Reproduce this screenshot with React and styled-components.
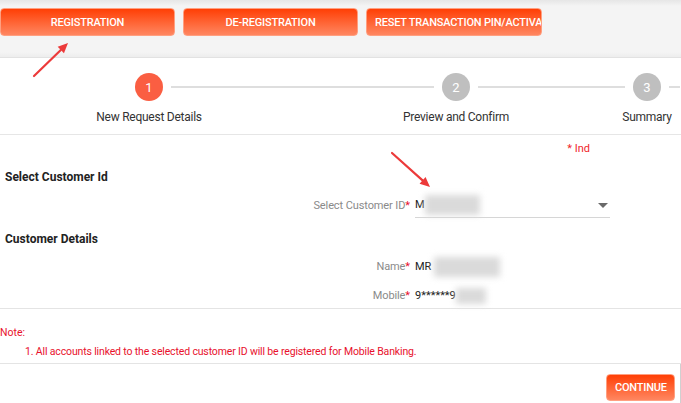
import React from 'react';
import styled, { createGlobalStyle } from 'styled-components';

const GlobalStyle = createGlobalStyle`
    html, body {
        margin: 0;
        padding: 0;
        background: #ffffff;
        font-family: Roboto, "Liberation Sans", Arial, sans-serif;
    }
`;

const Page = styled.div`
    position: relative;
    width: 681px;
    height: 403px;
    overflow: hidden;
    background: #fff;
`;

// แถบปุ่มเมนูด้านบน
const TabBar = styled.div`
    height: 58px;
    box-sizing: border-box;
    padding-top: 8px;
    display: flex;
    gap: 8px;
    background: linear-gradient(#e6e6e6 0px, #f4f4f4 6px, #f4f4f4 52px, #ececec 58px);
    border-bottom: 1px solid #e2e2e2;
`;

const OrangeButton = styled.button`
    flex: none;
    width: ${p => p.$w || 175}px;
    height: ${p => p.$h || 28}px;
    padding: 0 8px;
    border: 1px solid #ff9f80;
    border-radius: 4px;
    background: linear-gradient(#ff3f05, #ff6a3c 60%, #ff8660);
    color: #fff;
    font-family: Roboto, "Liberation Sans", Arial, sans-serif;
    font-size: 11px;
    font-weight: 500;
    letter-spacing: -0.2px;
    text-align: center;
    white-space: nowrap;
    overflow: hidden;
    cursor: pointer;
`;

const Stepper = styled.div`
    display: flex;
    height: 77px;
    box-sizing: border-box;
    padding-top: 15px;
    border-bottom: 1px solid #e6e6e6;
    overflow: hidden;
`;

const Step = styled.div`
    flex: none;
    width: ${p => p.$w}px;
    display: flex;
    flex-direction: column;
    align-items: center;
`;

const StepHead = styled.div`
    align-self: stretch;
    display: flex;
    align-items: center;
    height: 28px;
`;

const StepLine = styled.div`
    flex: 1;
    height: 2px;
    background: ${p => (p.$hidden ? 'transparent' : '#dedede')};
    margin: ${p => (p.$side === 'left' ? '0 8px 0 0' : '0 0 0 8px')};
`;

const Circle = styled.div`
    flex: none;
    width: 28px;
    height: 28px;
    border-radius: 50%;
    background: ${p => (p.$active ? '#fa5e42' : '#bfbfbf')};
    color: #fff;
    font-size: 13px;
    display: flex;
    align-items: center;
    justify-content: center;
`;

const StepLabel = styled.div`
    margin-top: 9px;
    font-size: 12px;
    line-height: 14px;
    color: #333;
    letter-spacing: -0.25px;
    white-space: nowrap;
`;

const Form = styled.div`
    padding-top: 8px;
`;

const MandatoryHint = styled.div`
    font-size: 11px;
    line-height: 12px;
    color: #f0262a;
    text-align: right;
    padding-right: 91px;
`;

const SectionTitle = styled.div`
    margin-top: ${p => p.$mt}px;
    padding-left: 5px;
    font-size: 12px;
    line-height: 16px;
    font-weight: 700;
    color: #222;
`;

const FieldRow = styled.div`
    margin-top: ${p => p.$mt}px;
    display: grid;
    grid-template-columns: 410px 195px;
    column-gap: 5px;
    align-items: center;
    font-size: 11px;
    line-height: ${p => p.$lh}px;
`;

const FieldLabel = styled.div`
    text-align: right;
    color: #8a8a8a;
    letter-spacing: -0.1px;

    & span {
        color: #e8112d;
    }
`;

const FieldValue = styled.div`
    display: flex;
    align-items: center;
    color: #222;
    height: ${p => p.$h || 20}px;
    border-bottom: ${p => (p.$select ? '1px solid #d6d6d6' : 'none')};
`;

const Masked = styled.span`
    display: inline-block;
    width: ${p => p.$w}px;
    height: ${p => p.$h}px;
    margin-left: ${p => p.$ml || 0}px;
    background: #dadada;
    filter: blur(3px);
`;

const Caret = styled.span`
    margin-left: auto;
    margin-right: 2px;
    width: 0;
    height: 0;
    border-left: 5px solid transparent;
    border-right: 5px solid transparent;
    border-top: 5px solid #6a6a6a;
`;

const Divider = styled.div`
    margin-top: ${p => p.$mt}px;
    height: 1px;
    background: #e4e4e4;
`;

const NoteBlock = styled.div`
    padding-top: 17px;
    padding-bottom: 4px;
    color: #e8112d;
    font-size: 10.5px;
    line-height: 14px;
    border-bottom: 1px solid #e4e4e4;
`;

const NoteItem = styled.div`
    margin-top: 5px;
    padding-left: 25px;
    letter-spacing: -0.15px;
`;

const Footer = styled.div`
    display: flex;
    justify-content: flex-end;
    padding: 10px 5px 0 0;
    border-right: 1px solid #d0d0d0;
    height: 40px;
`;

// ลูกศรสีแดงที่วางทับหน้าจอ
const Annotations = styled.svg`
    position: absolute;
    left: 0;
    top: 0;
    pointer-events: none;
`;

const Arrow = ({ x1, y1, x2, y2 }) => {
    const a = Math.atan2(y2 - y1, x2 - x1);
    const len = 10;
    const w = 4.5;
    const bx = x2 - len * Math.cos(a);
    const by = y2 - len * Math.sin(a);
    const px = -Math.sin(a) * w;
    const py = Math.cos(a) * w;
    return (
        <g>
            <line x1={x1} y1={y1} x2={bx} y2={by} stroke="#ec3a3a" strokeWidth="2.2" strokeLinecap="round" />
            <polygon points={`${x2},${y2} ${bx + px},${by + py} ${bx - px},${by - py}`} fill="#ec3a3a" />
        </g>
    );
};

const steps = [
    { n: 1, label: 'New Request Details', w: 298, active: true },
    { n: 2, label: 'Preview and Confirm', w: 316 },
    { n: 3, label: 'Summary', w: 66 },
];

const App = () => {
    return (
        <Page>
            <GlobalStyle />
            <TabBar>
                <OrangeButton>REGISTRATION</OrangeButton>
                <OrangeButton>DE-REGISTRATION</OrangeButton>
                <OrangeButton $w={176}>RESET TRANSACTION PIN/ACTIVATION</OrangeButton>
            </TabBar>

            <Stepper>
                {steps.map((s, i) => (
                    <Step key={s.n} $w={s.w}>
                        <StepHead>
                            <StepLine $side="left" $hidden={i === 0} />
                            <Circle $active={s.active}>{s.n}</Circle>
                            <StepLine $side="right" />
                        </StepHead>
                        <StepLabel>{s.label}</StepLabel>
                    </Step>
                ))}
            </Stepper>

            <Form>
                <MandatoryHint>* Ind</MandatoryHint>
                <SectionTitle $mt={14}>Select Customer Id</SectionTitle>
                <FieldRow $mt={8} $lh={24}>
                    <FieldLabel>Select Customer ID<span>*</span></FieldLabel>
                    <FieldValue $select $h={24}>
                        M<Masked $w={55} $h={20} />
                        <Caret />
                    </FieldValue>
                </FieldRow>

                <SectionTitle $mt={13}>Customer Details</SectionTitle>
                <FieldRow $mt={10} $lh={20}>
                    <FieldLabel>Name<span>*</span></FieldLabel>
                    <FieldValue>
                        MR<Masked $w={66} $h={20} $ml={3} />
                    </FieldValue>
                </FieldRow>
                <FieldRow $mt={9} $lh={20}>
                    <FieldLabel>Mobile<span>*</span></FieldLabel>
                    <FieldValue>
                        9******9<Masked $w={30} $h={16} />
                    </FieldValue>
                </FieldRow>
                <Divider $mt={2} />

                <NoteBlock>
                    <div>Note:</div>
                    <NoteItem>1. All accounts linked to the selected customer ID will be registered for Mobile Banking.</NoteItem>
                </NoteBlock>

                <Footer>
                    <OrangeButton $w={69} $h={27}>CONTINUE</OrangeButton>
                </Footer>
            </Form>

            <Annotations width="681" height="403">
                <Arrow x1={34} y1={76} x2={68} y2={43} />
                <Arrow x1={392} y1={153} x2={430} y2={187} />
            </Annotations>
        </Page>
    );
};

export default App;
